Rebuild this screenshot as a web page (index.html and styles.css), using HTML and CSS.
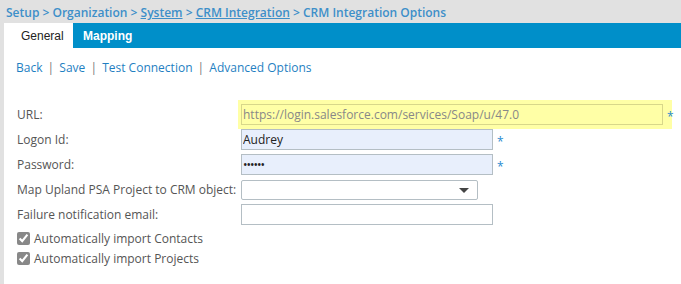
FILE: index.html
```html
<!DOCTYPE html>
<html lang="en">
<head>
    <meta charset="UTF-8">
    <title>CRM Integration Options</title>
    <link rel="stylesheet" href="styles.css">
</head>
<body>
    <div class="crumbs">
        <a class="crumb">Setup</a> &gt; <a class="crumb">Organization</a> &gt;
        <a class="crumb link">System</a> &gt; <a class="crumb link">CRM Integration</a> &gt;
        <span class="crumb">CRM Integration Options</span>
    </div>

    <div class="page">
        <div class="tabs">
            <div class="tab active">General</div>
            <div class="tab">Mapping</div>
        </div>

        <div class="actions">
            <a>Back</a> <span class="sep">|</span>
            <a>Save</a> <span class="sep">|</span>
            <a>Test Connection</a> <span class="sep">|</span>
            <a>Advanced Options</a>
        </div>

        <div class="form">
            <label>URL:</label>
            <div class="field highlight">
                <input type="text" class="wide url" value="https://login.salesforce.com/services/Soap/u/47.0">
                <span class="req">*</span>
            </div>

            <label>Logon Id:</label>
            <div class="field">
                <input type="text" class="filled" value="Audrey">
                <span class="req">*</span>
            </div>

            <label>Password:</label>
            <div class="field">
                <input type="password" class="filled" value="secret">
                <span class="req">*</span>
            </div>

            <label>Map Upland PSA Project to CRM object:</label>
            <div class="field">
                <div class="select"><span class="arrow"></span></div>
            </div>

            <label>Failure notification email:</label>
            <div class="field">
                <input type="text">
            </div>
        </div>

        <div class="checks">
            <label class="check"><input type="checkbox" checked> Automatically import Contacts</label>
            <label class="check"><input type="checkbox" checked> Automatically import Projects</label>
        </div>
    </div>
</body>
</html>
```

FILE: styles.css
```css
body {
    margin: 0;
    background-color: #e1e1e1;
    font-family: 'Open Sans', Arial, sans-serif;
    height: 284px;
    overflow: hidden;
}
.crumbs {
    height: 23px;
    line-height: 26px;
    padding-left: 6px;
    font-size: 12px;
    font-weight: 600;
    color: #3d8fc9;
    white-space: nowrap;
}
.crumb.link {
    text-decoration: underline;
}
.page {
    margin-left: 4px;
    background: white;
    height: 261px;
}
.tabs {
    display: flex;
    height: 25px;
    background-color: #008fc9;
    font-family: 'Liberation Sans', Arial, sans-serif;
    font-size: 12px;
}
.tab {
    line-height: 26px;
    color: white;
    font-weight: bold;
    padding: 0 10px;
}
.tab.active {
    background: white;
    color: #222;
    font-weight: normal;
    width: 69px;
    box-sizing: border-box;
    padding-left: 17px;
}
.actions {
    padding: 11px 0 0 12px;
    height: 30px;
    box-sizing: border-box;
    font-size: 12px;
    color: #1f7fc2;
}
.actions .sep {
    color: #777;
    margin: 0 2px;
}
.form {
    display: grid;
    grid-template-columns: 224px auto;
    row-gap: 4px;
    padding: 26px 0 0 13px;
    font-size: 12px;
    color: #555;
    align-items: center;
}
.form label {
    line-height: 21px;
}
.field {
    display: flex;
    align-items: center;
    height: 21px;
}
.field.highlight {
    background: #ffffa6;
    margin: -4px 0 -4px -3px;
    padding: 4px 0 4px 3px;
    width: 431px;
    box-sizing: content-box;
    height: 21px;
}
input[type=text], input[type=password] {
    flex-shrink: 0;
    width: 252px;
    height: 21px;
    box-sizing: border-box;
    border: 1px solid #b4bec4;
    padding: 0 1px;
    font-family: 'Open Sans', Arial, sans-serif;
    font-size: 12px;
    color: #222;
    background: white;
    margin: 0;
}
input.wide {
    width: 422px;
}
input.url {
    background: #ffffa6;
    border-color: #d8d78a;
    color: #888;
}
input.filled {
    background: #e8effc;
}
input[type=password] {
    letter-spacing: -1px;
}
.req {
    color: #2a8bd0;
    margin-left: 4px;
    font-size: 12px;
    line-height: 10px;
    padding-top: 4px;
}
.select {
    width: 237px;
    height: 20px;
    box-sizing: border-box;
    border: 1px solid #b4bec4;
    border-radius: 2px;
    position: relative;
}
.arrow {
    position: absolute;
    right: 8px;
    top: 7px;
    border-left: 5px solid transparent;
    border-right: 5px solid transparent;
    border-top: 5px solid #444;
}
.checks {
    padding: 3px 0 0 13px;
    font-size: 12px;
    color: #555;
}
.check {
    display: flex;
    align-items: center;
    height: 20px;
}
.check input {
    margin: 0 4px 0 0;
    width: 13px;
    height: 13px;
    accent-color: #888;
}
```
